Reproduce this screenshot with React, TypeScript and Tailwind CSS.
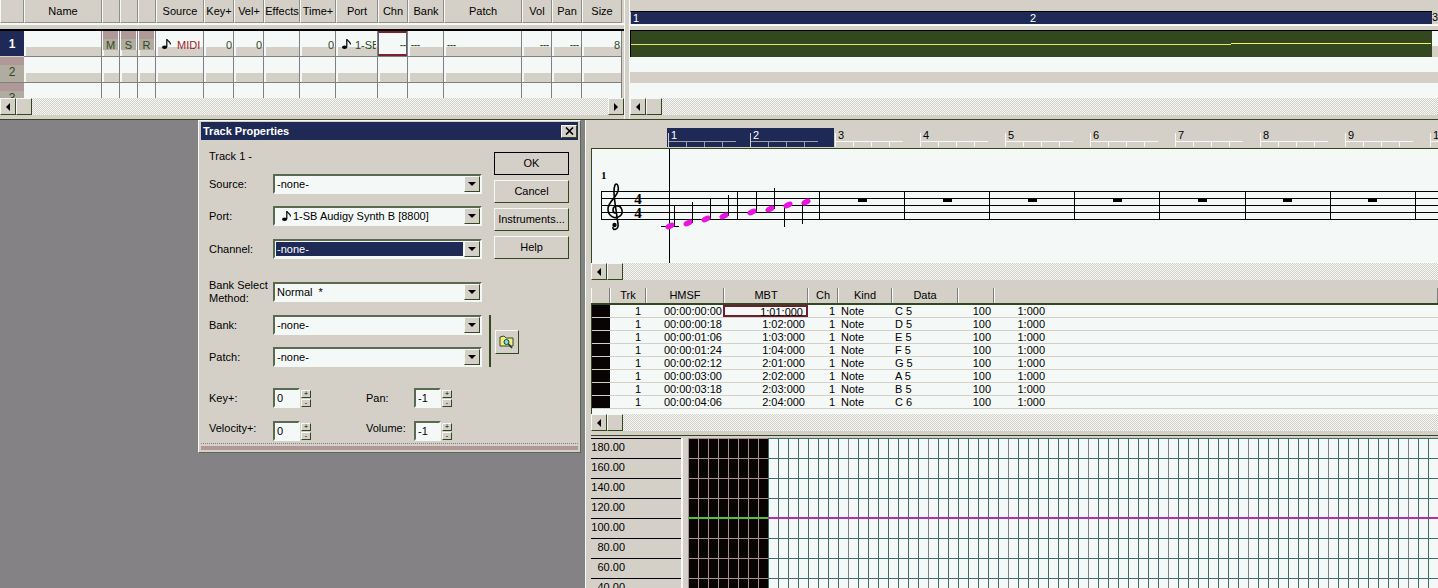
import type { ReactNode } from 'react';

const raised = 'border border-t-[#f4f8f6] border-l-[#f4f8f6] border-r-[#33481e] border-b-[#33481e] bg-[#d4d0c8]';
const sunken = 'border-2 border-t-[#5a6a50] border-l-[#5a6a50] border-r-[#f4f8f6] border-b-[#f4f8f6]';
const checker = 'bg-[image:repeating-conic-gradient(#d4d0c8_0_25%,#f4f8f6_0_50%)] bg-[length:2px_2px]';

const trackCols = [
  { name: '', w: 24 },
  { name: 'Name', w: 78 },
  { name: '', w: 18, v: 'M' },
  { name: '', w: 18, v: 'S' },
  { name: '', w: 18, v: 'R' },
  { name: 'Source', w: 48 },
  { name: 'Key+', w: 30, v: '0' },
  { name: 'Vel+', w: 30, v: '0' },
  { name: 'Effects', w: 36 },
  { name: 'Time+', w: 36, v: '0' },
  { name: 'Port', w: 42 },
  { name: 'Chn', w: 30 },
  { name: 'Bank', w: 36, v: '---' },
  { name: 'Patch', w: 78, v: '---' },
  { name: 'Vol', w: 30, v: '---' },
  { name: 'Pan', w: 30, v: '---' },
  { name: 'Size', w: 40, v: '8' },
];

const events = [
  ['00:00:00:00', '1:01:000', 'C 5'],
  ['00:00:00:18', '1:02:000', 'D 5'],
  ['00:00:01:06', '1:03:000', 'E 5'],
  ['00:00:01:24', '1:04:000', 'F 5'],
  ['00:00:02:12', '2:01:000', 'G 5'],
  ['00:00:03:00', '2:02:000', 'A 5'],
  ['00:00:03:18', '2:03:000', 'B 5'],
  ['00:00:04:06', '2:04:000', 'C 6'],
];

const notes = [
  [670, 226, 674, 205],
  [688, 223, 692, 202],
  [706, 219, 710, 199],
  [724, 216, 728, 195],
  [752, 212, 756, 192],
  [770, 209, 774, 188],
  [788, 205, 784, 227],
  [806, 202, 802, 224],
];

const staffLines = [191, 198, 205, 212, 219];
const barLines = [601, 737, 819, 904, 989, 1074, 1159, 1245, 1330, 1415];
const rests = [862, 947, 1032, 1117, 1202, 1287, 1372];
const tempoLabels = ['180.00', '160.00', '140.00', '120.00', '100.00', '80.00', '60.00', '40.00'];

function Arrow({ dir }: { dir: 'left' | 'right' | 'down' }) {
  if (dir === 'down') {
    return <div className="w-0 h-0 border-x-[4px] border-x-transparent border-t-[4px] border-t-black" />;
  }
  if (dir === 'left') {
    return <div className="w-0 h-0 border-y-[4px] border-y-transparent border-r-[4px] border-r-black" />;
  }
  return <div className="w-0 h-0 border-y-[4px] border-y-transparent border-l-[4px] border-l-black" />;
}

function NoteIcon({ className }: { className?: string }) {
  return (
    <svg width="9" height="10" viewBox="0 0 9 10" className={className}>
      <ellipse cx="2.6" cy="8.2" rx="2.6" ry="1.8" fill="black" />
      <rect x="4.2" y="0" width="1.2" height="8" fill="black" />
      <path d="M5 0.5 C6 2.5 8.5 2.5 8.5 5.5" fill="none" stroke="black" strokeWidth="1.1" />
    </svg>
  );
}

function ScrollBar({ right = true }: { right?: boolean }) {
  return (
    <div className={`flex h-[17px] shrink-0 ${checker}`}>
      <div className={`w-[16px] h-[17px] flex items-center justify-center ${raised}`}><Arrow dir="left" /></div>
      <div className={`w-[16px] h-[17px] ${raised}`} />
      <div className="flex-1" />
      {right && <div className={`w-[16px] h-[17px] flex items-center justify-center ${raised}`}><Arrow dir="right" /></div>}
    </div>
  );
}

function TrackRow({ n, active, h }: { n: number; active?: boolean; h: number }) {
  return (
    <div className="flex shrink-0 overflow-hidden" style={{ height: h }}>
      {trackCols.map((col, i) => {
        if (i === 0) {
          return active ? (
            <div key={i} className="w-[24px] h-[25px] bg-[#1e2a55] text-white font-bold text-[12px] flex items-center justify-center">{n}</div>
          ) : (
            <div key={i} className="w-[24px] h-[26px] shrink-0 flex flex-col border-b border-[#808080]">
              <div className="h-[8px] bg-[#b09898]" />
              <div className="flex-1 bg-[#b0aca0] text-[#33481e] text-[12px] text-center leading-[14px]">{n}</div>
            </div>
          );
        }
        const isMsr = active && i >= 2 && i <= 4;
        const chn = active && col.name === 'Chn';
        return (
          <div key={i} className="relative shrink-0 h-[26px] flex flex-col border-r border-b border-[#808080] bg-[#f4f8f6]" style={{ width: col.w }}>
            {isMsr ? (
              <div className="mx-px flex flex-col h-[19px]">
                <div className="h-[8px] bg-[#b09898]" />
                <div className="flex-1 bg-[#b0aca0]" />
                <span className="absolute inset-x-0 top-[7px] text-center text-[#33481e] leading-[14px]">{col.v}</span>
              </div>
            ) : (
              <div className="h-[16px]" />
            )}
            {!isMsr && <div className="mt-auto ml-[2px] h-[9px] bg-[#d4d0c8]" />}
            {isMsr && <div className="mt-auto ml-[2px] h-[6px] bg-[#d4d0c8]" />}
            {active && !isMsr && col.v && (
              <span className={`absolute top-[7px] leading-[14px] text-[#33481e] ${col.name === 'Bank' || col.name === 'Patch' ? 'left-[3px] font-bold text-[9px]' : col.v === '---' ? 'right-[2px] font-bold text-[9px]' : 'right-[1px]'}`}>{col.v}</span>
            )}
            {active && col.name === 'Source' && (
              <>
                <NoteIcon className="absolute left-[6px] top-[8px]" />
                <span className="absolute left-[21px] top-[7px] leading-[14px] whitespace-nowrap text-[#a01c28]">MIDI</span>
              </>
            )}
            {active && col.name === 'Port' && (
              <>
                <NoteIcon className="absolute left-[6px] top-[8px]" />
                <span className="absolute left-[19px] top-[7px] w-[21px] overflow-hidden leading-[14px] whitespace-nowrap text-[#33481e]">1-SB</span>
              </>
            )}
            {chn && (
              <div className="absolute inset-0 border-2 border-[#7c2030] border-l-[#606070] border-r-[#606070] border-l-1 border-r-1 bg-[#f4f8f6]">
                <span className="absolute right-0 top-[5px] leading-[14px] font-bold text-[9px] text-[#33481e]">--</span>
              </div>
            )}
          </div>
        );
      })}
    </div>
  );
}

function TrackPane() {
  return (
    <div className="w-[624px] shrink-0 flex flex-col">
      <div className="flex h-[23px] shrink-0 bg-[#d4d0c8]">
        {trackCols.map((col, i) => (
          <div key={i} className="shrink-0 border-r border-b border-[#909088] border-l border-l-[#f4f8f6] flex items-center justify-center whitespace-nowrap text-black" style={{ width: col.w }}>
            {col.name}
          </div>
        ))}
      </div>
      <div className="h-[8px] shrink-0 border-t-2 border-t-[#f4f8f6] border-b-2 border-b-black bg-[#d4d0c8]" />
      <TrackRow n={1} active h={26} />
      <TrackRow n={2} h={26} />
      <TrackRow n={3} h={15} />
      <ScrollBar />
    </div>
  );
}

function TimelinePane() {
  return (
    <div className="flex-1 flex flex-col min-w-0">
      <div className="h-[11px] shrink-0" />
      <div className="h-[13px] shrink-0 bg-[#1e2a55] border-t border-black flex justify-between text-white leading-[12px] pl-[2px] mr-[6px] border-l border-l-[#d4d0c8]">
        <span>1</span>
        <span className="mr-[396px]">2</span>
      </div>
      <div className="absolute right-0 top-[11px] w-[6px] h-[13px] overflow-hidden text-black leading-[12px]">3</div>
      <div className="h-[6px] shrink-0 border-t-2 border-t-[#f4f8f6] bg-[#d4d0c8]" />
      <div className="h-px shrink-0 bg-black" />
      <div className="h-[26px] shrink-0 flex">
        <div className="relative w-[802px] bg-[#33481e] border-l border-black">
          <div className="absolute left-0 top-[13px] w-[600px] h-px bg-[#e8e860]" />
          <div className="absolute left-[600px] top-[12px] w-[200px] h-px bg-[#f4f460]" />
        </div>
        <div className="flex-1 flex flex-col">
          <div className="flex-1 bg-[#f4f8f6]" />
          <div className="h-[11px] bg-[#d4d0c8]" />
        </div>
      </div>
      <div className="h-[15px] shrink-0 bg-[#f4f8f6]" />
      <div className="h-[11px] shrink-0 bg-[#d4d0c8]" />
      <div className="h-[15px] shrink-0 bg-[#f4f8f6]" />
      <ScrollBar right={false} />
    </div>
  );
}

function Combo({ value, selected, note }: { value: string; selected?: boolean; note?: boolean }) {
  return (
    <div className={`w-[209px] h-[20px] flex items-center bg-[#f4f8f6] ${sunken}`}>
      <div className={`flex-1 h-[14px] mx-[1px] pl-[1px] flex items-center whitespace-pre ${selected ? 'bg-[#1e2a55] text-white' : 'text-black'}`}>
        {note && <NoteIcon className="ml-[5px] mr-[2px]" />}
        {value}
      </div>
      <div className={`w-[16px] h-[16px] flex items-center justify-center ${raised}`}><Arrow dir="down" /></div>
    </div>
  );
}

function FormRow({ label, mt, children }: { label: ReactNode; mt: number; children: ReactNode }) {
  return (
    <div className="flex items-center h-[20px]" style={{ marginTop: mt }}>
      <div className="w-[64px] leading-[13px]">{label}</div>
      {children}
    </div>
  );
}

function Spin({ value }: { value: string }) {
  return (
    <div className="flex items-center">
      <div className={`w-[27px] h-[20px] pl-[2px] flex items-center bg-[#f4f8f6] ${sunken}`}>{value}</div>
      <div className="ml-[1px] w-[10px] flex flex-col gap-[1px]">
        <div className={`h-[8px] text-[7px] leading-[6px] text-center ${raised}`}>+</div>
        <div className={`h-[8px] text-[7px] leading-[5px] text-center ${raised}`}>-</div>
      </div>
    </div>
  );
}

function DialogButton({ label, isDefault }: { label: string; isDefault?: boolean }) {
  return (
    <div className={`w-[75px] h-[23px] flex items-center justify-center text-black ${raised} ${isDefault ? 'outline-1 outline-black -outline-offset-1 border-r-black border-b-black' : ''}`}>{label}</div>
  );
}

function TrackDialog() {
  return (
    <div className="absolute left-[198px] top-[120px] w-[383px] h-[333px] bg-[#d4d0c8] border border-[#5a6a50] border-t-[#f4f8f6] border-l-[#f4f8f6] p-[1px] flex flex-col z-10">
      <div className="h-[18px] shrink-0 mx-[1px] bg-[#1e2a55] text-white font-bold flex items-center justify-between pl-[2px] pr-[1px]">
        <span>Track Properties</span>
        <div className={`w-[16px] h-[13px] flex items-center justify-center text-black ${raised}`}>
          <svg width="9" height="8" viewBox="0 0 9 8"><path d="M1 0.5 L8 7.5 M8 0.5 L1 7.5" stroke="black" strokeWidth="1.6" /></svg>
        </div>
      </div>
      <div className="flex flex-1 pl-[9px]">
        <div className="flex-none w-[273px]">
          <div className="h-[16px] mt-[8px] flex items-center">Track 1 -</div>
          <FormRow label="Source:" mt={10}><Combo value="-none-" /></FormRow>
          <FormRow label="Port:" mt={12}><Combo value="1-SB Audigy Synth B [8800]" note /></FormRow>
          <FormRow label="Channel:" mt={13}><Combo value="-none-" selected /></FormRow>
          <FormRow label={<>Bank Select<br />Method:</>} mt={23}><Combo value="Normal  *" /></FormRow>
          <FormRow label="Bank:" mt={13}><Combo value="-none-" /></FormRow>
          <FormRow label="Patch:" mt={12}><Combo value="-none-" /></FormRow>
          <div className="flex items-center h-[20px] mt-[21px]">
            <div className="w-[64px]">Key+:</div>
            <Spin value="0" />
            <div className="ml-[55px] w-[48px]">Pan:</div>
            <Spin value="-1" />
          </div>
          <div className="flex items-center h-[20px] mt-[13px]">
            <div className="w-[64px] pb-[5px]">Velocity+:</div>
            <Spin value="0" />
            <div className="ml-[55px] w-[48px] pb-[5px]">Volume:</div>
            <Spin value="-1" />
          </div>
        </div>
        <div className="relative flex-none w-[92px]">
          <div className="ml-[12px] mt-[12px] flex flex-col gap-[5px]">
            <DialogButton label="OK" isDefault />
            <DialogButton label="Cancel" />
            <DialogButton label="Instruments..." />
            <DialogButton label="Help" />
          </div>
          <div className="absolute left-[7px] top-[175px] w-[2px] h-[52px] bg-[#33481e]" />
          <div className={`absolute left-[13px] top-[190px] w-[24px] h-[24px] flex items-center justify-center ${raised}`}>
            <svg width="16" height="14" viewBox="0 0 16 14">
              <path d="M1 2 L5 1 L7 3 L14 3 L14 11 L1 11 Z" fill="#f0f080" stroke="#33481e" />
              <circle cx="7.5" cy="7" r="2.5" fill="#80d8e0" stroke="#1a3a40" />
              <path d="M9.5 9 L13 13" stroke="#1a3a40" strokeWidth="1.6" />
            </svg>
          </div>
        </div>
      </div>
      <div className="h-[3px] mx-[1px] border-t border-dotted border-[#808080]" />
      <div className="h-[4px] mx-[1px] mb-[1px] bg-[#b09898]" />
    </div>
  );
}

function RulerSeg({ n, w, active }: { n: number; w: number; active?: boolean }) {
  return (
    <div className={`relative shrink-0 h-[19px] ${active ? 'text-white' : 'text-black'}`} style={{ width: w }}>
      <span className="absolute left-[4px] top-[1px] leading-[12px]">{n}</span>
      <div className={`absolute left-[1px] top-[5px] bottom-0 w-px ${active ? 'bg-[#d4d0c8]' : 'bg-[#f4f8f6]'}`} />
      <div className="absolute left-[2px] top-[13px] flex">
        {[0, 1, 2].map((t) => (
          <div key={t} className={`w-[18px] h-[6px] border-t border-r ${active ? 'border-[#a0a0a0]' : 'border-[#f4f8f6]'}`} />
        ))}
        <div className={`w-[13px] h-[6px] border-t ${active ? 'border-[#a0a0a0]' : 'border-[#f4f8f6]'}`} />
      </div>
    </div>
  );
}

function StaffPane() {
  return (
    <div className="h-[163px] shrink-0 flex flex-col">
      <div className="h-[8px] shrink-0" />
      <div className="flex h-[19px] shrink-0 pl-[76px] overflow-hidden">
        <div className="flex shrink-0 bg-[#1e2a55] w-[167px]">
          <RulerSeg n={1} w={82} active />
          <RulerSeg n={2} w={85} active />
        </div>
        {[3, 4, 5, 6, 7, 8, 9, 1].map((n, i) => <RulerSeg key={i} n={n} w={85} />)}
      </div>
      <div className="h-px shrink-0" />
      <div className="h-px shrink-0 bg-[#33481e]" />
      <div className="h-[114px] shrink-0 bg-[#f4f8f6] border-l border-[#33481e] overflow-hidden">
        <svg width="846" height="114" viewBox="592 149 846 114" className="block">
          <text x="601" y="179" fontFamily="'Liberation Serif', serif" fontWeight="bold" fontSize="11" fill="black">1</text>
          {staffLines.map((y) => <rect key={y} x="601" y={y} width="837" height="1" fill="black" />)}
          {barLines.map((x) => <rect key={x} x={x} y="191" width="1" height="29" fill="black" />)}
          <path d="M616 213 C612 213 612 207 616 206 C622 205 624 213 620 216 C615 220 608 216 608 209 C608 202 616 198 618 191 C619 186 617 182 615 185 C613 190 614 196 615 203 L618 224 C619 230 612 231 613 227" fill="none" stroke="black" strokeWidth="1.6" />
          <circle cx="614.5" cy="225" r="2.2" fill="black" />
          <text x="638" y="204" textAnchor="middle" fontFamily="'Liberation Serif', serif" fontWeight="bold" fontSize="15" fill="black">4</text>
          <text x="638" y="218" textAnchor="middle" fontFamily="'Liberation Serif', serif" fontWeight="bold" fontSize="15" fill="black">4</text>
          <rect x="669" y="149" width="1" height="114" fill="black" />
          <rect x="661" y="226" width="18" height="1" fill="black" />
          {rests.map((x) => <rect key={x} x={x - 4} y="199" width="9" height="3" fill="black" />)}
          {notes.map(([cx, cy, sx, sy]) => (
            <g key={cx}>
              <rect x={sx} y={Math.min(cy, sy)} width="1" height={Math.abs(cy - sy)} fill="black" />
              <ellipse cx={cx} cy={cy} rx="4.8" ry="2.8" transform={`rotate(-25 ${cx} ${cy})`} fill="#e814e0" />
            </g>
          ))}
        </svg>
      </div>
      <ScrollBar right={false} />
    </div>
  );
}

function EventList() {
  return (
    <div className="h-[146px] shrink-0 flex flex-col mt-[2px]">
      <div className="h-[3px] shrink-0" />
      <div className="flex h-[15px] shrink-0 text-black">
        {[['', 19], ['Trk', 36], ['HMSF', 78], ['MBT', 84], ['Ch', 30], ['Kind', 54], ['Data', 66], ['', 36], ['', 444]].map(([label, w], i) => (
          <div key={i} className="shrink-0 flex items-center justify-center border-r border-[#808080] border-l border-l-[#f4f8f6]" style={{ width: w as number }}>{label}</div>
        ))}
      </div>
      <div className="h-[2px] shrink-0 bg-[#33481e]" />
      <div className="flex-1 bg-[#f4f8f6] border-l border-[#33481e] flex flex-col">
        {events.map(([hmsf, mbt, data], i) => (
          <div key={i} className="flex h-[13px] shrink-0 border-b border-[#d4d0c8] leading-[12px] text-black">
            <div className="w-[18px] bg-[#080404]" />
            <div className="w-[31px] text-right">1</div>
            <div className="w-[82px] text-right pr-[1px]">{hmsf}</div>
            <div className={`w-[85px] text-right pr-[3px] ${i === 0 ? 'border-2 border-[#6a2030] leading-[10px] pr-[1px]' : ''}`}>{mbt}</div>
            <div className="w-[27px] text-right">1</div>
            <div className="w-[57px] pl-[6px]">Note</div>
            <div className="w-[50px] pl-[3px]">{data}</div>
            <div className="w-[49px] text-right">100</div>
            <div className="w-[54px] text-right">1:000</div>
          </div>
        ))}
        <div className="h-[5px]" />
      </div>
      <ScrollBar right={false} />
    </div>
  );
}

function TempoPane() {
  const cols = Array.from({ length: 75 }, (_, i) => 688 + i * 10);
  const rows = [438, 458, 478, 498, 538, 558, 578];
  return (
    <div className="flex-1 flex flex-col min-h-0 mt-[4px]">
      <div className="h-px shrink-0 bg-[#33481e]" />
      <div className="flex-1 flex min-h-0 pt-[2px]">
        <div className="w-[90px] shrink-0 flex flex-col overflow-hidden">
          {tempoLabels.map((label) => (
            <div key={label} className="h-[20px] shrink-0 border-t border-black w-[90px] pr-[56px] text-right leading-[16px] text-black">{label}</div>
          ))}
        </div>
        <div className="w-[7px] shrink-0 border-l-2 border-[#f4f8f6]" />
        <svg width="750" height="150" viewBox="688 438 750 150" className="block shrink-0">
          <rect x="688" y="438" width="750" height="150" fill="#f4f8f6" />
          <rect x="688" y="438" width="80" height="150" fill="#080404" />
          {cols.map((x) => (
            <rect key={x} x={x} y="438" width="1" height="150" fill={x < 768 ? '#a89090' : (x - 768) % 80 === 0 && x > 768 ? '#808080' : '#3f6b6b'} />
          ))}
          {rows.map((y) => (
            <g key={y}>
              <rect x="688" y={y} width="80" height="1" fill="#a89090" />
              <rect x="768" y={y} width="670" height="1" fill="#3f6b6b" />
            </g>
          ))}
          <rect x="688" y="517" width="80" height="2" fill="#50c040" />
          <rect x="768" y="517" width="670" height="2" fill="#b030b0" />
        </svg>
      </div>
    </div>
  );
}

export default function App() {
  return (
    <div className="relative w-[1438px] h-[588px] overflow-hidden bg-[#d4d0c8] text-[11px] font-['Liberation_Sans',Arial,sans-serif]">
      <div className="flex h-[119px] relative">
        <TrackPane />
        <div className="w-[6px] shrink-0 border-x border-[#f4f8f6]" />
        <TimelinePane />
      </div>
      <div className="h-px bg-[#33481e]" />
      <div className="flex h-[468px]">
        <div className="w-[585px] shrink-0 bg-[#848284]" />
        <div className="flex-1 min-w-0 flex flex-col border-l border-[#f4f8f6] pl-[5px]">
          <StaffPane />
          <EventList />
          <TempoPane />
        </div>
      </div>
      <TrackDialog />
    </div>
  );
}
